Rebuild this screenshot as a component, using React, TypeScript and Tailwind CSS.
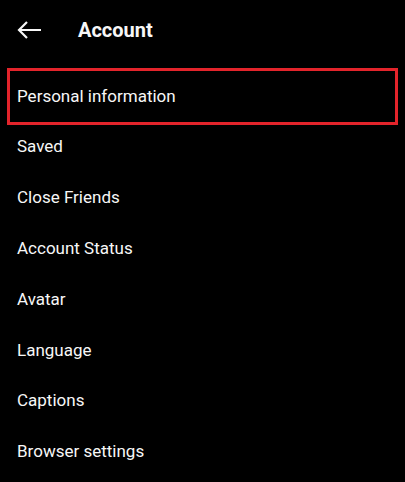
import React from "react";

const items = [
  "Personal information",
  "Saved",
  "Close Friends",
  "Account Status",
  "Avatar",
  "Language",
  "Captions",
  "Browser settings",
];

export default function App() {
  return (
    <div
      className="w-[405px] h-[482px] bg-black text-[#f7f7f7] overflow-hidden"
      style={{ fontFamily: "Roboto, 'Liberation Sans', sans-serif" }}
    >
      <div className="h-[60px] flex items-center pl-[17px]">
        <svg width="25" height="20" viewBox="0 0 25 20" fill="none" className="shrink-0">
          <path
            d="M24 10 H2.5 M10 2 L2 10 L10 18"
            stroke="#f7f7f7"
            strokeWidth="2.2"
            strokeLinecap="butt"
            strokeLinejoin="miter"
          />
        </svg>
        <div className="ml-[36px] text-[20px] font-bold leading-none">Account</div>
      </div>
      <div className="mt-[11px] flex flex-col">
        {items.map((t, i) => (
          <div
            key={t}
            className={
              i === 0
                ? "h-[50.8px] mx-[10px] pl-[7px] flex items-center text-[17px] outline-[3px] outline-solid outline-[#e3242b]"
                : "h-[50.8px] mx-[10px] pl-[7px] flex items-center text-[17px]"
            }
          >
            {t}
          </div>
        ))}
      </div>
    </div>
  );
}
